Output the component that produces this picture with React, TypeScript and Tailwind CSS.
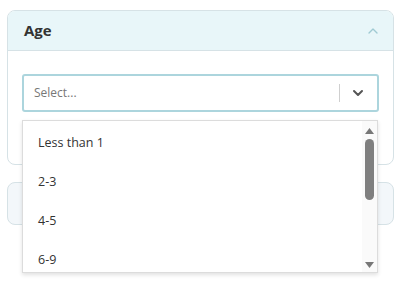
import { ChevronDown, ChevronUp } from 'lucide-react'

const options = ['Less than 1', '2-3', '4-5', '6-9']

export default function App() {
  return (
    <div className="relative w-[400px] h-[283px] bg-white px-[7px] pt-[10px] overflow-hidden" style={{ fontFamily: '"Open Sans", "Noto Sans", sans-serif' }}>
      {/* Age filter card */}
      <div className="w-[387px] border border-[#d6e2e6] rounded-lg overflow-hidden">
        <div className="h-[40px] bg-[#e8f6f9] border-b border-[#d6e2e6] flex items-center justify-between pl-4 pr-[12px]">
          <span className="text-[15px] font-bold text-[#333]">Age</span>
          <ChevronUp className="w-4 h-4 text-[#9fcad3]" strokeWidth={2} />
        </div>
        <div className="px-[14px] pt-[23px] pb-[52px]">
          <div className="h-[38px] border-2 border-[#acd5dd] rounded-[3px] flex items-center pl-[10px] pr-[1px]">
            <span className="flex-1 text-[12px] text-[#777]">Select...</span>
            <div className="w-px h-[18px] bg-[#cfcfcf]" />
            <div className="w-[36px] flex justify-center">
              <ChevronDown className="w-[16px] h-[16px] text-[#555]" strokeWidth={3} />
            </div>
          </div>
        </div>
      </div>

      {/* next card, collapsed */}
      <div className="w-[387px] h-[43px] mt-[17px] border border-[#d6e2e6] rounded-lg bg-[#f3f7fa]" />

      {/* open dropdown menu */}
      <div className="absolute left-[22px] top-[120px] w-[356px] h-[153px] bg-white border border-[#dcdcdc] shadow-[0_2px_4px_rgba(0,0,0,0.12)] flex">
        <div className="flex-1 pt-[3px] overflow-hidden">
          {options.map(o => (
            <div key={o} className="h-[39px] flex items-center pl-[15px] text-[12.5px] text-[#333]">{o}</div>
          ))}
        </div>
        <div className="w-[15px] bg-[#fafafa] flex flex-col items-center pt-[7px] pb-[4px]">
          <svg width="9" height="6" viewBox="0 0 9 6"><path d="M4.5 0L9 6H0z" fill="#777" /></svg>
          <div className="w-[9px] h-[61px] mt-[5px] rounded-full bg-[#7f7f7f]" />
          <div className="flex-1" />
          <svg width="9" height="6" viewBox="0 0 9 6"><path d="M0 0h9L4.5 6z" fill="#777" /></svg>
        </div>
      </div>
    </div>
  )
}
